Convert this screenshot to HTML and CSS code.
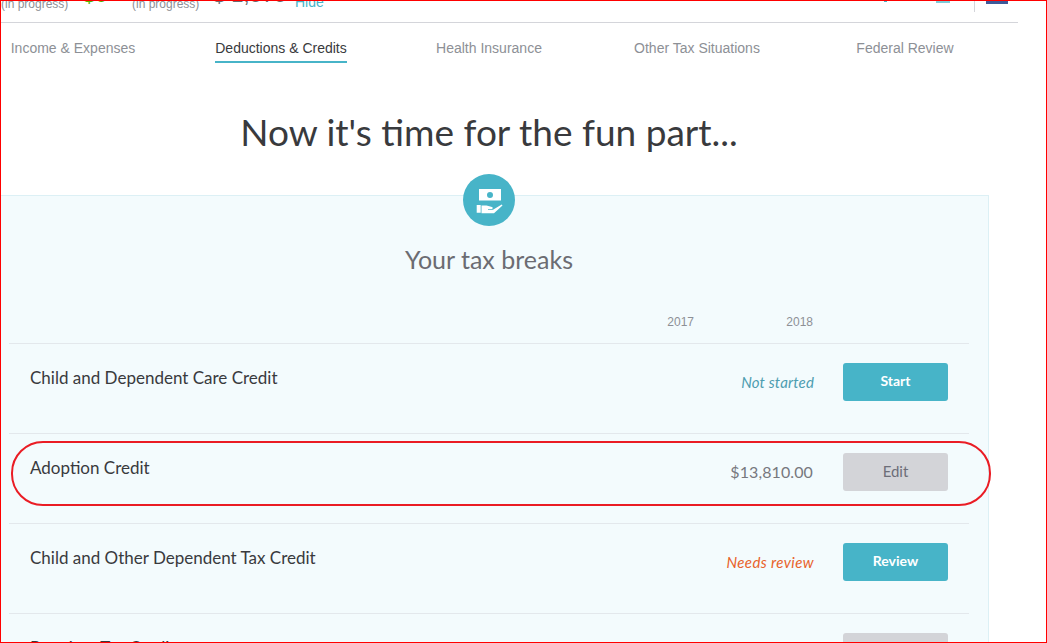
FILE: index.html
```html
<!DOCTYPE html>
<html lang="en">
<head>
<meta charset="utf-8">
<title>Deductions &amp; Credits</title>
<link rel="stylesheet" href="styles.css">
</head>
<body>
<div class="page">
  <header class="summary">
    <span class="progress">(in progress)</span>
    <span class="amount-big refund">$0</span>
    <span class="progress second">(in progress)</span>
    <span class="amount-big owed">$ 1,575</span>
    <a class="hide">Hide</a>
    <span class="tools">
      <span class="tool-a"></span>
      <span class="tool-b"></span>
      <span class="divider"></span>
      <span class="avatar"></span>
    </span>
  </header>
  <nav class="tabs">
    <a class="tab"><span>Income &amp; Expenses</span></a>
    <a class="tab active"><span>Deductions &amp; Credits</span></a>
    <a class="tab"><span>Health Insurance</span></a>
    <a class="tab"><span>Other Tax Situations</span></a>
    <a class="tab"><span>Federal Review</span></a>
  </nav>
  <h1 class="title">Now it's time for the fun part...</h1>
  <section class="panel">
    <div class="badge">
      <svg width="52" height="52" viewBox="0 0 52 52">
        <circle cx="26" cy="26" r="26" fill="#47b4c8"/>
        <path fill="#fff" fill-rule="evenodd" d="M16 15h22v11.500H16zM27 18a3 3 0 1 0 0 6 3 3 0 0 0 0-6z"/>
        <path fill="#fff" d="M13.700 31h4v7.700h-4zM18.500 31.500h5l5.500 1.500c1 .3 1 1.700 0 2l-4 .3v.7l5-.3 8.700-5.200.8.900-8.500 7.800H18.500z"/>
      </svg>
    </div>
    <h2 class="subtitle">Your tax breaks</h2>
    <div class="years">
      <span class="year">2017</span>
      <span class="year">2018</span>
      <span class="year-spacer"></span>
    </div>
    <div class="row">
      <span class="name">Child and Dependent Care Credit</span>
      <span class="status teal">Not started</span>
      <a class="btn">Start</a>
    </div>
    <div class="row">
      <span class="name">Adoption Credit</span>
      <span class="status money">$13,810.00</span>
      <a class="btn grey">Edit</a>
    </div>
    <div class="row">
      <span class="name">Child and Other Dependent Tax Credit</span>
      <span class="status orange">Needs review</span>
      <a class="btn">Review</a>
    </div>
    <div class="row">
      <span class="name">Premium Tax Credit</span>
      <span class="status"></span>
      <a class="btn grey">Edit</a>
    </div>
  </section>
</div>
<div class="highlight"></div>
<div class="frame"></div>
</body>
</html>
```
FILE: styles.css
```css
html, body {
  margin: 0;
  padding: 0;
  width: 1047px;
  height: 643px;
  overflow: hidden;
  background: #fff;
}
* { box-sizing: border-box; }

.page {
  width: 1058px;
  margin: -20px 0 0 -40px;
  font-family: "Lato", sans-serif;
  color: #393a3d;
}

.summary {
  display: flex;
  align-items: flex-start;
  height: 43px;
  border-bottom: 1px solid #d4d5da;
  padding-left: 41px;
  font-family: "Liberation Sans", sans-serif;
  overflow: hidden;
}
.progress {
  font-size: 12px;
  line-height: 14px;
  margin-top: 17px;
  color: #8d9096;
  width: 82px;
  white-space: nowrap;
}
.progress.second { width: 81px; }
.amount-big {
  font-size: 22px;
  line-height: 26px;
  margin-top: 2px;
  white-space: nowrap;
}
.refund { color: #53b700; width: 49px; }
.owed { color: #6b6c72; width: 82px; }
.hide {
  font-size: 14px;
  line-height: 16px;
  margin-top: 14px;
  color: #47b4c8;
}
.tools {
  display: flex;
  align-items: flex-start;
  margin-left: auto;
  padding-right: 10px;
}
.tool-a {
  width: 3px;
  height: 2px;
  margin-top: 20px;
  background: #47b4c8;
}
.tool-b {
  width: 14px;
  height: 2px;
  margin: 21px 0 0 49px;
  background: #7fcbd8;
}
.divider {
  width: 1px;
  height: 32px;
  margin-left: 24px;
  background: #d4d5da;
}
.avatar {
  width: 22px;
  height: 24px;
  margin-left: 11px;
  background: #3f5a99;
}

.tabs {
  display: grid;
  grid-template-columns: repeat(5, 208px);
  justify-content: center;
  height: 40px;
  padding-top: 16px;
  font-family: "Liberation Sans", sans-serif;
  font-size: 14px;
}
.tab {
  display: flex;
  justify-content: center;
  color: #8d9096;
}
.tab span {
  display: block;
  height: 24px;
  line-height: 18px;
}
.tab.active { color: #393a3d; }
.tab.active span { border-bottom: 2px solid #47b4c8; }

.title {
  margin: 0;
  padding-top: 45px;
  height: 132px;
  text-align: center;
  font-size: 37px;
  line-height: 48px;
  font-weight: 400;
}

.panel {
  width: 1000px;
  margin: 0 auto;
  padding: 0 19px;
  background: #f3fbfd;
  border: 1px solid #dcf0f5;
  position: relative;
}
.badge {
  display: flex;
  justify-content: center;
  height: 52px;
  margin-top: -22px;
}
.subtitle {
  margin: 0;
  padding-top: 17px;
  height: 64px;
  text-align: center;
  font-size: 25px;
  line-height: 32px;
  font-weight: 400;
  color: #6b6c72;
}
.years {
  display: flex;
  justify-content: flex-end;
  height: 54px;
  padding: 25px 21px 0 0;
  border-bottom: 1px solid #e3e8ec;
  font-family: "Liberation Sans", sans-serif;
  font-size: 12px;
  line-height: 14px;
  color: #8d9096;
}
.year { width: 119px; text-align: right; }
.year-spacer { width: 135px; }

.row {
  display: flex;
  align-items: flex-start;
  height: 90px;
  padding: 19px 21px 0;
  border-bottom: 1px solid #e3e8ec;
}
.name {
  flex: 1;
  font-size: 17px;
  line-height: 28px;
  margin-top: 1px;
}
.status {
  font-size: 15px;
  line-height: 38px;
  letter-spacing: 0.15px;
  text-align: right;
  white-space: nowrap;
  margin-right: 29px;
}
.teal { font-style: italic; color: #4d9db0; }
.orange { font-style: italic; color: #e8622a; letter-spacing: 0.4px; }
.money {
  font-size: 16px;
  color: #77787e;
  margin-right: 30px;
  letter-spacing: 0.1px;
}
.btn {
  width: 105px;
  height: 38px;
  border-radius: 3px;
  background: #47b4c8;
  color: #fff;
  font-size: 14px;
  font-weight: 700;
  line-height: 36px;
  text-align: center;
}
.btn.grey {
  background: #d3d4d8;
  color: #6d6e78;
  font-size: 15px;
  font-weight: 400;
}

.highlight {
  position: absolute;
  left: 11px;
  top: 441px;
  width: 980px;
  height: 65px;
  border: 2px solid #ea1c24;
  border-radius: 32px;
  pointer-events: none;
}
.frame {
  position: fixed;
  inset: 0;
  border: 1px solid #f00;
  pointer-events: none;
}
```
